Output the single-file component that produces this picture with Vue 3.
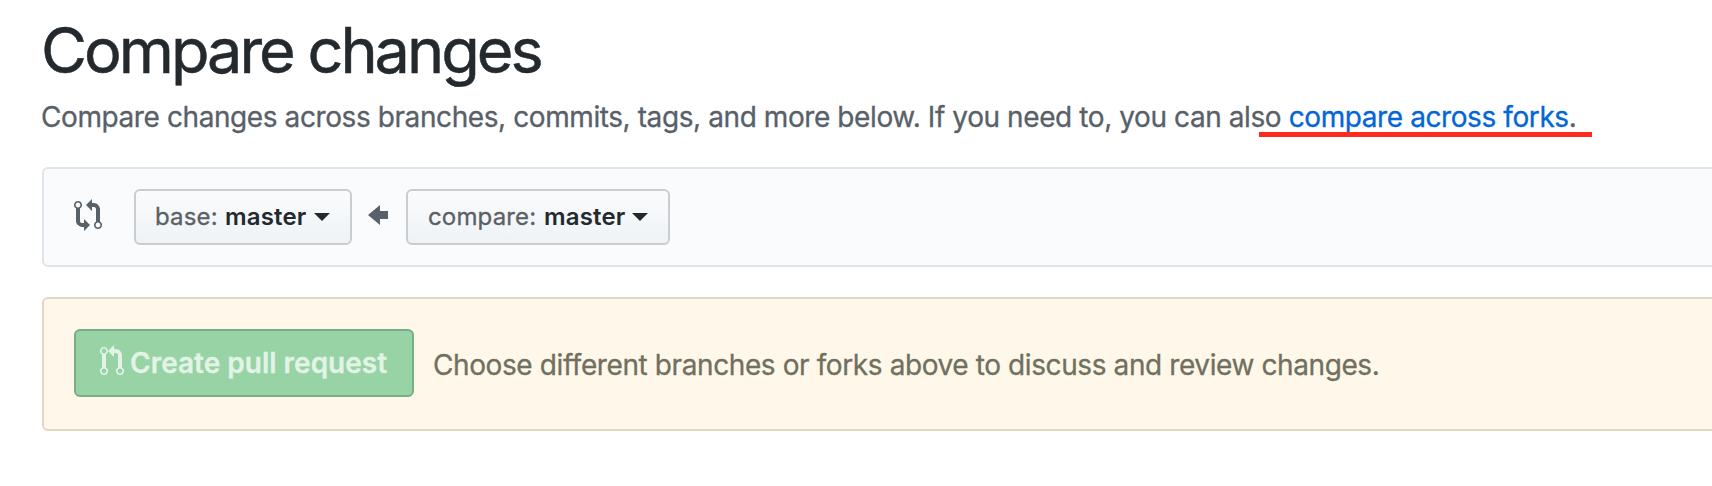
<script setup>
const branches = [
  { label: 'base:', name: 'master', kind: 'base' },
  { label: 'compare:', name: 'master', kind: 'compare' },
]
</script>

<template>
  <main class="page">
    <h1 class="title">Compare changes</h1>
    <p class="lede">
      <span class="lede-text">Compare changes across branches, commits, tags, and more below. If you need to, you can also </span><a class="link">compare across forks</a>.
      <span class="marker"></span>
    </p>

    <section class="range">
      <svg class="compare-icon" width="28" height="32" viewBox="0 0 14 16">
        <path fill-rule="evenodd" d="M5 12H4c-.27-.02-.48-.11-.69-.31-.21-.2-.3-.42-.31-.69V4.72A1.993 1.993 0 0 0 2 1a1.993 1.993 0 0 0-1 3.72V11c.03.78.34 1.47.94 2.06.6.59 1.28.91 2.06.94h1v2l3-3-3-3v2zM2 1.8c.66 0 1.2.55 1.2 1.2 0 .65-.55 1.2-1.2 1.2C1.35 4.2.8 3.65.8 3c0-.65.55-1.2 1.2-1.2zm11 9.48V5c-.03-.78-.34-1.47-.94-2.06-.6-.59-1.28-.91-2.06-.94H9V0L6 3l3 3V4h1c.27.02.48.11.69.31.21.2.3.42.31.69v6.28A1.993 1.993 0 0 0 12 15a1.993 1.993 0 0 0 1-3.72zm-1 2.92c-.66 0-1.2-.55-1.2-1.2 0-.65.55-1.2 1.2-1.2.65 0 1.2.55 1.2 1.2 0 .65-.55 1.2-1.2 1.2z" />
      </svg>
      <template v-for="(b, i) in branches" :key="b.kind">
        <svg v-if="i" class="arrow-icon" width="20" height="32" viewBox="0 0 10 16">
          <path d="M6 3L0 8l6 5v-3h4V6H6V3z" />
        </svg>
        <button class="select" :class="b.kind">
          <span class="select-label">{{ b.label }}</span>
          <strong class="select-name">{{ b.name }}</strong>
          <span class="caret"></span>
        </button>
      </template>
    </section>

    <section class="notice">
      <button class="create" disabled>
        <svg width="24" height="32" viewBox="0 0 12 16">
          <path fill-rule="evenodd" d="M11 11.28V5c-.03-.78-.34-1.47-.94-2.06C9.46 2.35 8.78 2.03 8 2H7V0L4 3l3 3V4h1c.27.02.48.11.69.31.21.2.3.42.31.69v6.28A1.993 1.993 0 0 0 10 15a1.993 1.993 0 0 0 1-3.72zm-1 2.92c-.66 0-1.2-.55-1.2-1.2 0-.65.55-1.2 1.2-1.2.65 0 1.2.55 1.2 1.2 0 .65-.55 1.2-1.2 1.2zM4 3c0-1.11-.89-2-2-2a1.993 1.993 0 0 0-1 3.72v6.56A1.993 1.993 0 0 0 2 15a1.993 1.993 0 0 0 1-3.72V4.72c.59-.34 1-.98 1-1.72zm-.8 10c0 .66-.55 1.2-1.2 1.2-.65 0-1.2-.55-1.2-1.2 0-.65.55-1.2 1.2-1.2.65 0 1.2.55 1.2 1.2zM2 4.2C1.34 4.2.8 3.65.8 3c0-.65.55-1.2 1.2-1.2.65 0 1.2.55 1.2 1.2 0 .65-.55 1.2-1.2 1.2z" />
        </svg>
        <span class="create-label">Create pull request</span>
      </button>
      <span class="hint">Choose different branches or forks above to discuss and review changes.</span>
    </section>
  </main>
</template>

<style>
body {
  background: #fff;
}
</style>

<style scoped>
.page {
  box-sizing: border-box;
  width: 1712px;
  height: 486px;
  padding-left: 42px;
  overflow: hidden;
  font-family: Inter, "Liberation Sans", sans-serif;
  color: #24292e;
  background: #fff;
  white-space: nowrap;
}
.title {
  margin: 0 0 0 -1px;
  padding-top: 3px;
  font-size: 63px;
  line-height: 95px;
  font-weight: 400;
  -webkit-text-stroke: 0.5px #24292e;
  letter-spacing: -3.03px;
}
.lede {
  position: relative;
  margin: 0;
  height: 69px;
  font-size: 28px;
  line-height: 38px;
  letter-spacing: -0.41px;
  text-indent: -1px;
  color: #586069;
  -webkit-text-stroke: 0.3px currentColor;
}
.link {
  color: #0366d6;
}
.marker {
  position: absolute;
  left: 1217px;
  top: 34px;
  width: 333px;
  height: 5px;
  background: #ff2a1c;
}
.range,
.notice {
  box-sizing: border-box;
  display: flex;
  width: 1720px;
  border: 2px solid #e1e4e8;
  border-radius: 6px;
}
.range {
  height: 100px;
  padding: 20px 30px;
  background: #fafbfc;
}
.compare-icon,
.arrow-icon {
  flex: none;
  margin-top: 10px;
  fill: #586069;
}
.compare-icon {
  margin-right: 32px;
}
.arrow-icon {
  margin: 10px 18px 0 16px;
}
.select {
  box-sizing: border-box;
  display: flex;
  align-items: center;
  height: 56px;
  padding: 0 20px 0 19px;
  border: 2px solid #c9ccd0;
  border-radius: 6px;
  background: linear-gradient(#fafbfc, #eff3f6);
  font-family: inherit;
  font-size: 24px;
  line-height: 36px;
  color: #24292e;
}
.select.base {
  width: 218px;
}
.select.compare {
  width: 264px;
  padding-left: 20px;
}
.select-label {
  flex: none;
  width: 70px;
  text-align: left;
  letter-spacing: 0.15px;
  color: #5b6065;
  -webkit-text-stroke: 0.3px currentColor;
}
.compare .select-label {
  width: 116px;
}
.select-name {
  flex: none;
  width: 89px;
  text-align: left;
  font-weight: 600;
  letter-spacing: 0.15px;
}
.compare .select-name {
  width: 88px;
}
.caret {
  border: 8px solid transparent;
  border-top-color: #24292e;
  border-bottom: 0;
}
.notice {
  height: 134px;
  margin-top: 30px;
  padding: 30px;
  border-color: #dfd8c2;
  background: #fff8ea;
}
.create {
  box-sizing: border-box;
  display: flex;
  width: 340px;
  height: 68px;
  margin-right: 18px;
  padding: 14px 24px;
  border: 2px solid #78ae87;
  border-radius: 6px;
  background: #97d3a5;
  font-family: inherit;
  font-size: 28px;
  line-height: 37px;
  font-weight: 600;
  color: #e3f4e7;
  -webkit-text-stroke: 0.3px currentColor;
}
.create svg {
  flex: none;
  margin-right: 6px;
  fill: #e3f4e7;
}
.hint {
  padding-top: 17px;
  padding-left: 1px;
  font-size: 28px;
  line-height: 38px;
  letter-spacing: -0.4px;
  color: #70705f;
  -webkit-text-stroke: 0.3px currentColor;
}
</style>
